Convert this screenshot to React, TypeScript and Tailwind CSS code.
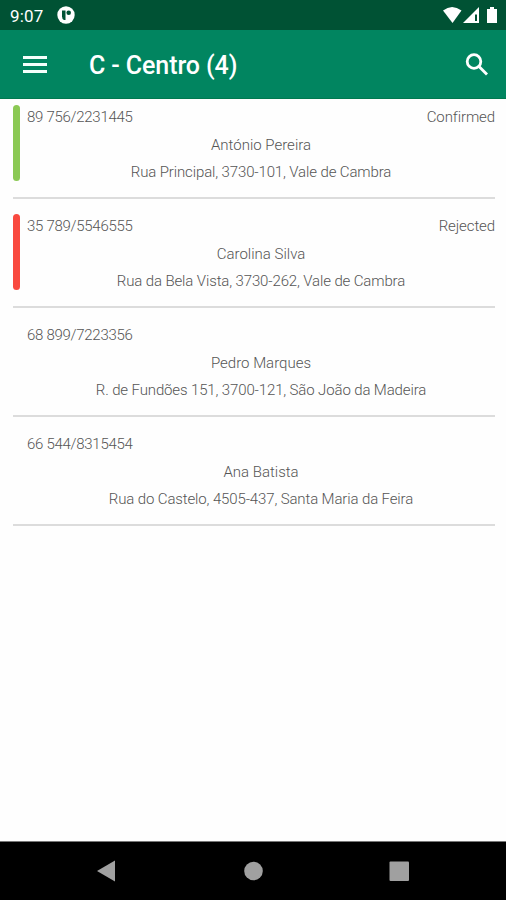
const stops = [
  { code: "89 756/2231445", status: "Confirmed", name: "António Pereira", address: "Rua Principal, 3730-101, Vale de Cambra", bar: "bg-[#8bc954]" },
  { code: "35 789/5546555", status: "Rejected", name: "Carolina Silva", address: "Rua da Bela Vista, 3730-262, Vale de Cambra", bar: "bg-[#f9493f]" },
  { code: "68 899/7223356", status: "", name: "Pedro Marques", address: "R. de Fundões 151, 3700-121, São João da Madeira", bar: "bg-transparent" },
  { code: "66 544/8315454", status: "", name: "Ana Batista", address: "Rua do Castelo, 4505-437, Santa Maria da Feira", bar: "bg-transparent" },
];

function StatusBar() {
  return (
    <div className="flex h-[30px] items-center bg-[#005234] pl-[10px] pr-[8px] text-white">
      <span className="w-[47px] pt-[2px] text-[17px] leading-[30px] tracking-[0.2px]">9:07</span>
      <svg width="18" height="18" viewBox="0 0 18 18">
        <circle cx="9" cy="9" r="8.7" fill="#fff" />
        <path d="M5 4.500h3.500v9.500H7q-2-1-2-3.500z" fill="#005234" />
        <circle cx="11.700" cy="6.800" r="2.300" fill="#005234" />
      </svg>
      <svg className="ml-auto" width="56" height="20" viewBox="0 0 56 20" fill="#fff">
        <path d="M1 5.500Q10 -1.500 19.500 5.500L10.500 18z" />
        <path fillRule="evenodd" d="M21 18L37 2v16zM33 9.500v6.500h2V9.500z" />
        <path d="M45 4h3V2h4v2h3v14H45z" />
      </svg>
    </div>
  );
}

export default function App() {
  return (
    <div className="flex h-[900px] w-[506px] flex-col overflow-hidden bg-[#fefefe] font-[Roboto,sans-serif]">
      <StatusBar />
      <header className="flex h-[69px] items-center border-b border-[#00794f] bg-[#018560] pl-[23px] pr-[17px] text-white">
        <svg className="mt-[2px]" width="24" height="18" viewBox="0 0 24 18" fill="#f4fffb">
          <path d="M0 0h24v3H0zM0 7h24v3H0zM0 14h24v3H0z" />
        </svg>
        <h1 className="ml-[42px] pt-[3px] text-[25px] font-medium tracking-[-0.1px]">C - Centro (4)</h1>
        <svg className="ml-auto mt-[2px]" width="24" height="24" viewBox="0 0 24 24" fill="none" stroke="#fff" strokeWidth="2.800">
          <circle cx="9" cy="8.500" r="6.800" />
          <path d="M14 13.500l8 8" />
        </svg>
      </header>
      <main className="flex-1 pl-[13px] pr-[11px] text-[15px] font-light text-[#555]">
        {stops.map((s) => (
          <section key={s.code} className="flex h-[109px] flex-col">
            <div className="flex h-[98px] gap-[7px] pt-[6px]">
              <div className={`h-[76px] w-[7px] rounded-full ${s.bar}`} />
              <div className="flex flex-1 flex-col pt-px">
                <div className="flex h-[22px] items-center justify-between leading-[20px]">
                  <span className="tracking-[-0.28px]">{s.code}</span>
                  <span className="tracking-[-0.1px]">{s.status}</span>
                </div>
                <div className="mt-[4px] text-center leading-[27px]">{s.name}</div>
                <div className="text-center leading-[27px] tracking-[-0.13px]">{s.address}</div>
              </div>
            </div>
            <div className="h-[2px] bg-[#dcdcdc]" />
          </section>
        ))}
      </main>
      <nav className="flex h-[59px] items-center border-t border-[#777] bg-black">
        <svg width="506" height="58" viewBox="0 0 506 58" fill="#a0a0a0">
          <path d="M97 29L115 18.500v21z" />
          <circle cx="253.500" cy="29" r="9.300" />
          <rect x="389.500" y="19.500" width="19.500" height="19.500" rx="1" />
        </svg>
      </nav>
    </div>
  );
}
